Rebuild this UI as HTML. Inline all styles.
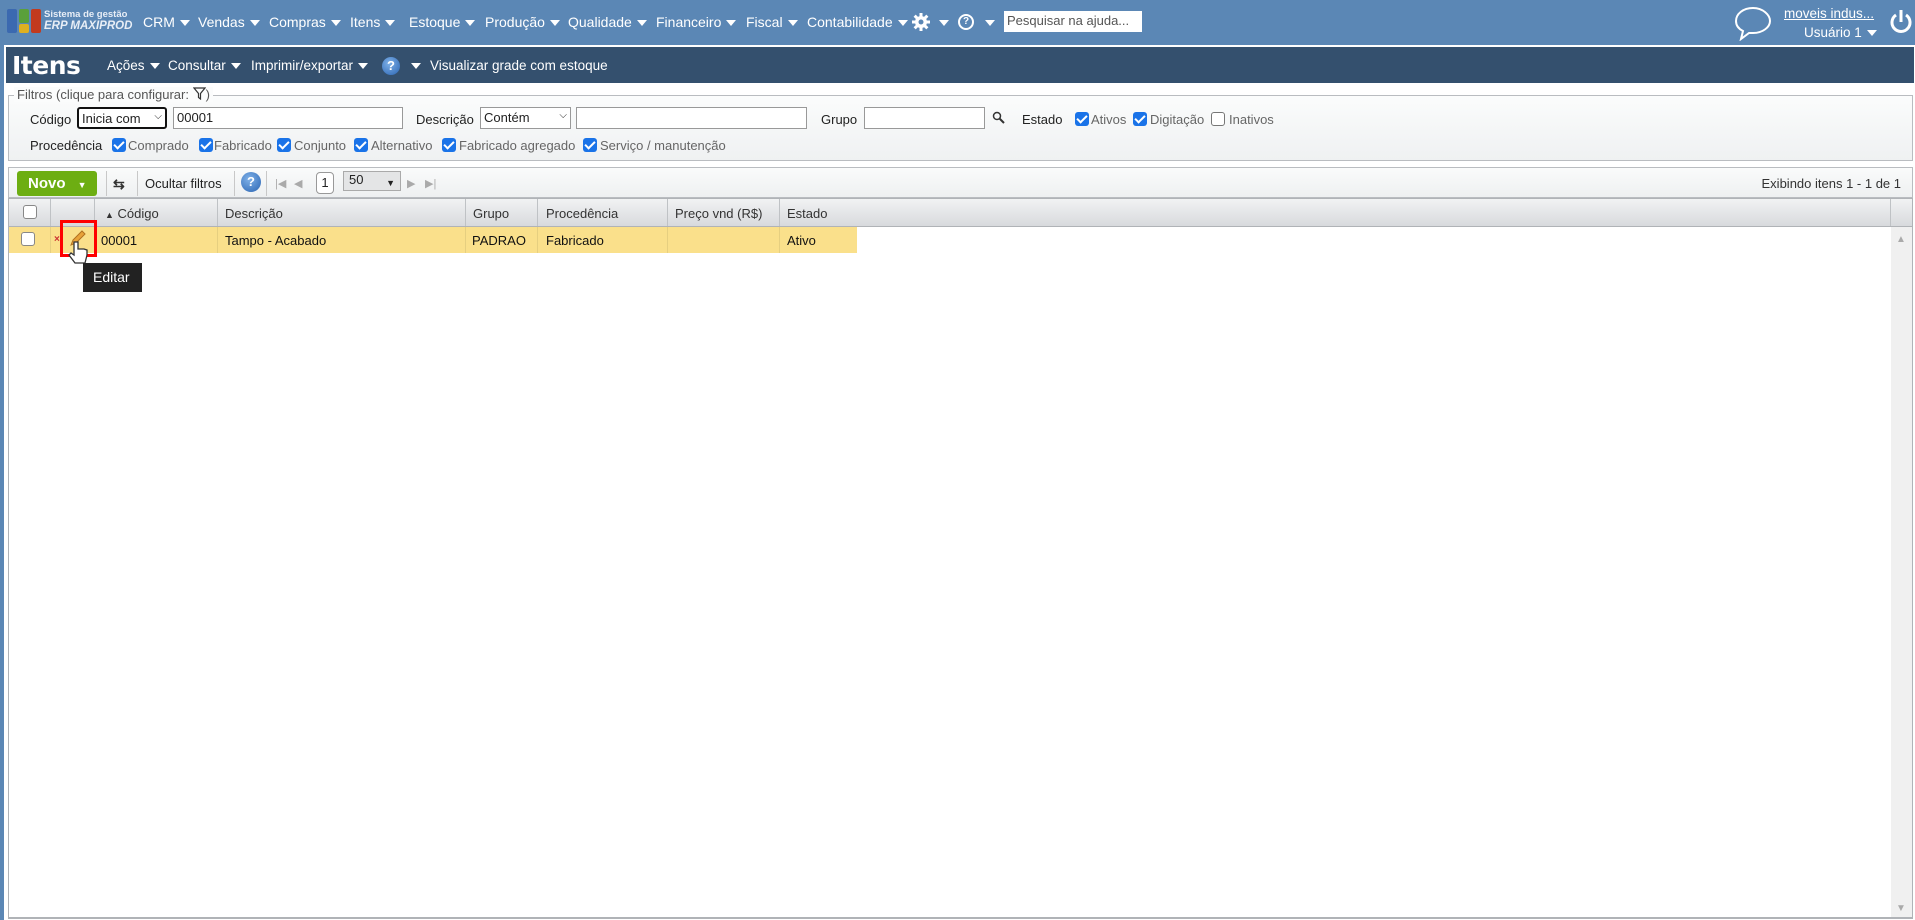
<!DOCTYPE html>
<html><head><meta charset="utf-8">
<style>
*{box-sizing:border-box;margin:0;padding:0}
body{width:1915px;height:920px;overflow:hidden;background:#5b87b5;font-family:"Liberation Sans",Arial,sans-serif;font-size:13px;color:#222;position:relative}
.a{position:absolute;white-space:nowrap}
.top{color:#fff;font-size:14px;top:14px}
.tri{display:inline-block;width:0;height:0;border-left:5px solid transparent;border-right:5px solid transparent;border-top:6px solid #fff;vertical-align:middle;margin-left:5px}
#main{position:absolute;left:4px;top:45px;width:1911px;height:875px;background:#fff}
#bar{position:absolute;left:6px;top:47px;width:1908px;height:36px;background:#34506e}
.bar{color:#fff;font-size:13.5px;top:58px}
.fs{position:absolute;left:8px;top:95px;width:1905px;height:66px;border:1px solid #b9bcc0;background:linear-gradient(#fbfcfc,#eff1f2)}
.lbl{font-size:13px;color:#222}
.cb{display:inline-block;width:14px;height:14px;border-radius:3px;background:#1a73e8;position:absolute}
.cb:after{content:"";position:absolute;left:4px;top:1px;width:4px;height:8px;border:solid #fff;border-width:0 2px 2px 0;transform:rotate(45deg)}
.cbo{display:inline-block;width:14px;height:14px;border-radius:3px;border:1px solid #777;background:#fff;position:absolute}
.g{color:#666}
.inp{position:absolute;height:22px;border:1px solid #999;background:#fff;font-size:13px;padding:2px 3px}
.tb{position:absolute;left:8px;top:167px;width:1905px;height:31px;border:1px solid #b9bcc0;background:linear-gradient(#fafbfb,#eef0f1)}
.sep{position:absolute;top:171px;width:1px;height:25px;background:#c8c8c8}
.hdr{position:absolute;left:8px;top:198px;width:1905px;height:29px;background:linear-gradient(#f1f2f3,#d8dadd);border:1px solid #b0b3b7}
.col{position:absolute;top:199px;width:1px;height:27px;background:#bfc2c5}
.ht{top:206px;font-size:13px;color:#333}
.row{position:absolute;left:9px;top:227px;width:848px;height:26px;background:#fae08b}
.rt{top:233px;font-size:13px;color:#111}
.help{position:absolute;width:20px;height:20px;border-radius:50%;background:radial-gradient(circle at 40% 35%,#7fb1e8,#2a64b2);color:#fff;font-weight:bold;font-size:13px;text-align:center;line-height:20px}
.nav{color:#aaa;font-size:11px;top:177px}
</style></head><body>
<div class="a" style="left:7px;top:9px;width:10px;height:24px;background:#3b69b0;border-radius:2px"></div>
<div class="a" style="left:19px;top:9px;width:10px;height:14px;background:#5aa03a;border-radius:2px"></div>
<div class="a" style="left:19px;top:24px;width:10px;height:9px;background:#e0b020;border-radius:2px"></div>
<div class="a" style="left:31px;top:9px;width:10px;height:24px;background:#c23a1e;border-radius:2px"></div>
<div class="a" style="left:44px;top:9px;color:#e8eef6;font-size:9.5px;font-weight:bold">Sistema de gestão</div>
<div class="a" style="left:44px;top:20px;color:#e8eef6;font-size:11.5px;font-weight:bold;font-style:italic">ERP MAXIPROD</div>
<div class="a top" style="left:143px">CRM<span class="tri"></span></div>
<div class="a top" style="left:198px">Vendas<span class="tri"></span></div>
<div class="a top" style="left:269px">Compras<span class="tri"></span></div>
<div class="a top" style="left:350px">Itens<span class="tri"></span></div>
<div class="a top" style="left:409px">Estoque<span class="tri"></span></div>
<div class="a top" style="left:485px">Produção<span class="tri"></span></div>
<div class="a top" style="left:568px">Qualidade<span class="tri"></span></div>
<div class="a top" style="left:656px">Financeiro<span class="tri"></span></div>
<div class="a top" style="left:746px">Fiscal<span class="tri"></span></div>
<div class="a top" style="left:807px">Contabilidade<span class="tri"></span></div>
<svg class="a" style="left:911px;top:12px" width="20" height="20" viewBox="0 0 20 20"><g fill="#fff"><circle cx="10" cy="10" r="6"/><rect x="8.5" y="1" width="3" height="18"/><rect x="1" y="8.5" width="18" height="3"/><rect x="8.5" y="1" width="3" height="18" transform="rotate(45 10 10)"/><rect x="8.5" y="1" width="3" height="18" transform="rotate(-45 10 10)"/></g><circle cx="10" cy="10" r="2.5" fill="#5b87b5"/></svg>
<div class="a top" style="left:934px"><span class="tri"></span></div>
<div class="a" style="left:958px;top:14px;width:16px;height:16px;border:2px solid #fff;border-radius:50%;color:#fff;font-size:10px;font-weight:bold;text-align:center;line-height:12px">?</div>
<div class="a top" style="left:980px"><span class="tri"></span></div>
<div class="a" style="left:1004px;top:11px;width:138px;height:21px;background:#fff;color:#555;font-size:13px;padding:2px 3px">Pesquisar na ajuda...</div>
<svg class="a" style="left:1733px;top:5px" width="40" height="36" viewBox="0 0 40 36"><path d="M20 3C10 3 3 9 3 16c0 5 3 8 7 10l-2 8 8-6c1 0 3 0 4 0 10 0 17-6 17-12S30 3 20 3z" fill="none" stroke="#fff" stroke-width="2"/></svg>
<div class="a" style="left:1784px;top:6px;color:#fff;font-size:13.5px;text-decoration:underline">moveis indus...</div>
<div class="a" style="left:1804px;top:25px;color:#fff;font-size:13.5px">Usuário 1<span class="tri"></span></div>
<svg class="a" style="left:1889px;top:9px" width="24" height="26" viewBox="0 0 24 26"><path d="M7 6A9 9 0 1 0 17 6" fill="none" stroke="#fff" stroke-width="3"/><rect x="10.5" y="1" width="3" height="12" fill="#fff"/></svg>

<div id="main"></div>
<div id="bar"></div>
<div class="a" style="left:12px;top:51px;color:#fff;font-size:25px;font-weight:bold;font-family:'DejaVu Sans',sans-serif;letter-spacing:-0.5px">Itens</div>
<div class="a bar" style="left:107px">Ações<span class="tri"></span></div>
<div class="a bar" style="left:168px">Consultar<span class="tri"></span></div>
<div class="a bar" style="left:251px">Imprimir/exportar<span class="tri"></span></div>
<div class="help" style="left:382px;top:57px;width:18px;height:18px;line-height:18px">?</div>
<div class="a bar" style="left:406px"><span class="tri"></span></div>
<div class="a bar" style="left:430px">Visualizar grade com estoque</div>

<div class="fs"></div>
<div class="a" style="left:14px;top:87px;background:#fbfcfc;padding:0 3px;color:#555;font-size:13px">Filtros (clique para configurar: <svg width="13" height="13" viewBox="0 0 13 13" style="vertical-align:-1px"><path d="M1 1h11L7.5 6.5V12L5.5 10.5V6.5z" fill="none" stroke="#333" stroke-width="1.2"/></svg>)</div>
<div class="a lbl" style="left:30px;top:112px">Código</div>
<div class="inp" style="left:77px;top:107px;width:90px;border:2px solid #111;border-radius:3px">Inicia com <span style="float:right;font-size:10px">&#x2335;</span></div>
<div class="inp" style="left:173px;top:107px;width:230px">00001</div>
<div class="a lbl" style="left:416px;top:112px">Descrição</div>
<div class="inp" style="left:480px;top:107px;width:91px">Contém<span style="float:right;font-size:10px">&#x2335;</span></div>
<div class="inp" style="left:576px;top:107px;width:231px"></div>
<div class="a lbl" style="left:821px;top:112px">Grupo</div>
<div class="inp" style="left:864px;top:107px;width:121px"></div>
<svg class="a" style="left:992px;top:111px" width="13" height="13" viewBox="0 0 13 13"><circle cx="5" cy="5" r="3.5" fill="none" stroke="#333" stroke-width="1.5"/><path d="M7.5 7.5L12 12" stroke="#333" stroke-width="2"/></svg>
<div class="a lbl" style="left:1022px;top:112px">Estado</div>
<span class="cb" style="left:1075px;top:112px"></span><div class="a g" style="left:1091px;top:112px">Ativos</div>
<span class="cb" style="left:1133px;top:112px"></span><div class="a g" style="left:1150px;top:112px">Digitação</div>
<span class="cbo" style="left:1211px;top:112px"></span><div class="a g" style="left:1229px;top:112px">Inativos</div>
<div class="a lbl" style="left:30px;top:138px">Procedência</div>
<span class="cb" style="left:112px;top:138px"></span><div class="a g" style="left:128px;top:138px">Comprado</div>
<span class="cb" style="left:199px;top:138px"></span><div class="a g" style="left:214px;top:138px">Fabricado</div>
<span class="cb" style="left:277px;top:138px"></span><div class="a g" style="left:294px;top:138px">Conjunto</div>
<span class="cb" style="left:354px;top:138px"></span><div class="a g" style="left:371px;top:138px">Alternativo</div>
<span class="cb" style="left:442px;top:138px"></span><div class="a g" style="left:459px;top:138px">Fabricado agregado</div>
<span class="cb" style="left:583px;top:138px"></span><div class="a g" style="left:600px;top:138px">Serviço / manutenção</div>

<div class="tb"></div>
<div class="a" style="left:17px;top:171px;width:80px;height:25px;background:#6dae12;border-radius:3px;color:#fff;font-weight:bold;font-size:15px;padding:4px 0 0 11px">Novo <span style="font-size:9px;margin-left:8px">▼</span></div>
<div class="sep" style="left:106px"></div>
<div class="a" style="left:113px;top:176px;font-size:14px;font-weight:bold;color:#333">⇆</div>
<div class="sep" style="left:137px"></div>
<div class="a" style="left:145px;top:176px;color:#222">Ocultar filtros</div>
<div class="sep" style="left:234px"></div>
<div class="help" style="left:241px;top:172px">?</div>
<div class="sep" style="left:266px"></div>
<div class="a nav" style="left:275px">|◀</div>
<div class="a nav" style="left:294px">◀</div>
<div class="a" style="left:316px;top:172px;width:18px;height:22px;border:1px solid #999;border-radius:4px;background:#fff;text-align:center;line-height:20px">1</div>
<div class="a" style="left:343px;top:171px;width:58px;height:20px;border:1px solid #aaa;background:#e4e5e6;padding:0 5px;line-height:16px">50<span style="float:right;font-size:9px;line-height:22px">▼</span></div>
<div class="a nav" style="left:407px">▶</div>
<div class="a nav" style="left:425px">▶|</div>
<div class="a" style="right:14px;top:176px;color:#333">Exibindo itens 1 - 1 de 1</div>

<div class="hdr"></div>
<div class="col" style="left:50px"></div><div class="col" style="left:94px"></div><div class="col" style="left:217px"></div><div class="col" style="left:465px"></div><div class="col" style="left:537px"></div><div class="col" style="left:667px"></div><div class="col" style="left:779px"></div><div class="col" style="left:1890px"></div>
<span class="cbo" style="left:23px;top:205px;border-color:#888"></span>
<div class="a ht" style="left:105px"><span style="font-size:9px">▲</span> Código</div>
<div class="a ht" style="left:225px">Descrição</div>
<div class="a ht" style="left:473px">Grupo</div>
<div class="a ht" style="left:546px">Procedência</div>
<div class="a ht" style="left:675px">Preço vnd (R$)</div>
<div class="a ht" style="left:787px">Estado</div>
<div class="a" style="left:8px;top:227px;width:1px;height:691px;background:#b0b3b7"></div>
<div class="a" style="left:1912px;top:227px;width:1px;height:691px;background:#b0b3b7"></div>
<div class="a" style="left:8px;top:917px;width:1905px;height:2px;background:#b0b3b7"></div>
<div class="a" style="left:1891px;top:227px;width:21px;height:690px;background:#f0f0f0"></div>
<div class="a" style="left:1896px;top:234px;color:#aaa;font-size:10px">▲</div>
<div class="a" style="left:1896px;top:903px;color:#aaa;font-size:10px">▼</div>
<div class="row"></div>
<div class="col" style="left:50px;top:227px;height:26px;background:#e6cf80"></div><div class="col" style="left:94px;top:227px;height:26px;background:#e6cf80"></div><div class="col" style="left:217px;top:227px;height:26px;background:#e6cf80"></div><div class="col" style="left:465px;top:227px;height:26px;background:#e6cf80"></div><div class="col" style="left:537px;top:227px;height:26px;background:#e6cf80"></div><div class="col" style="left:667px;top:227px;height:26px;background:#e6cf80"></div><div class="col" style="left:779px;top:227px;height:26px;background:#e6cf80"></div>
<span class="cbo" style="left:21px;top:232px;border-color:#888"></span>
<div class="a" style="left:54px;top:234px;color:#c33;font-size:10px;font-weight:bold">×</div>
<svg class="a" style="left:68px;top:228px" width="20" height="20" viewBox="0 0 20 20"><path d="M3 17l2-5L14 3l3 3-9 9z" fill="#e8a33a" stroke="#b07020" stroke-width="1"/></svg>
<div class="a" style="left:60px;top:220px;width:37px;height:37px;border:3px solid #f00"></div>
<svg class="a" style="left:68px;top:240px" width="22" height="26" viewBox="0 0 22 26"><path d="M6 2v13l-3-2-2 2 6 8h10l2-8v-5l-3-1-3 0-3 0V2z" fill="#fff" stroke="#333" stroke-width="1.3"/></svg>
<div class="a rt" style="left:101px">00001</div>
<div class="a rt" style="left:225px">Tampo - Acabado</div>
<div class="a rt" style="left:472px">PADRAO</div>
<div class="a rt" style="left:546px">Fabricado</div>
<div class="a rt" style="left:787px">Ativo</div>
<div class="a" style="left:83px;top:263px;width:59px;height:29px;background:#222;color:#fff;font-size:14px;padding:6px 0 0 10px">Editar</div>
</body></html>
